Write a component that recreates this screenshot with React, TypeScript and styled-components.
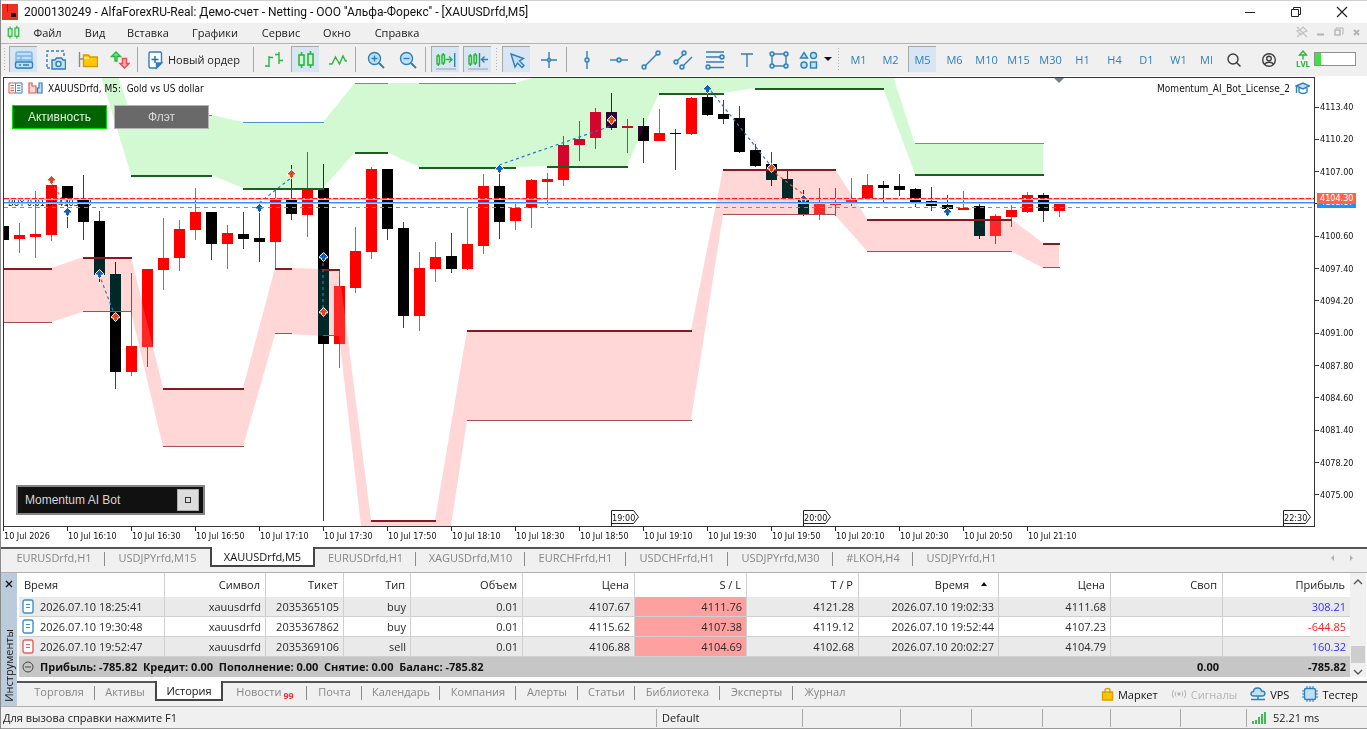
import React from "react";
import styled, { createGlobalStyle, css } from "styled-components";

const BLUE = "#2f7fb8";
const LIGHT = "#bfe0fb";
const GREEN = "#27b83c";
const UI_FONT = '"Open Sans", "Noto Sans", sans-serif';
const CHART_FONT = '"DejaVu Sans Condensed", "DejaVu Sans", sans-serif';

const GlobalStyle = createGlobalStyle`
  * { box-sizing: border-box; }
  body { margin: 0; background: #f0f0f0; font-family: ${UI_FONT}; font-size: 11px; color: #1b1b1b; }
  button { font: inherit; color: inherit; background: none; border: 0; padding: 0; margin: 0; }
  svg { display: block; flex: none; }
`;

const Window = styled.div`
  display: flex;
  flex-direction: column;
  min-height: 100vh;
  border: solid #8a8a8a;
  border-width: 0 0 0 1px;
  background: #f0f0f0;
`;

const TitleBar = styled.header`
  display: flex;
  align-items: center;
  height: 23px;
  padding: 0 18px 1px 1px;
  gap: 6px;
  background: #fff;
  border-top: 1px solid #d0d0d0;
`;

const Title = styled.h1`
  margin: 0;
  flex: 1;
  font-family: Roboto, sans-serif;
  font-size: 12px;
  font-weight: 400;
  color: #111;
  white-space: nowrap;
`;

const WindowControls = styled.div`
  display: flex;
  gap: 32px;
`;

const MenuBar = styled.nav`
  display: flex;
  align-items: center;
  height: 20px;
  padding: 0 4px 2px 5px;
  background: #f0f0f0;
`;

const MenuItem = styled.button<{ $width: number }>`
  width: ${(p) => p.$width}px;
  text-align: center;
  color: #1b1b1b;
`;

const DocControls = styled.div`
  display: flex;
  gap: 4px;
  margin-left: auto;
`;

const Toolbar = styled.div`
  display: flex;
  align-items: center;
  height: 33px;
  padding: 0 0 2px 6px;
  border-top: 1px solid #b4b4b4;
  background: #f0f0f0;
  position: relative;
`;

const Grip = styled.span<{ $lead?: boolean }>`
  flex: none;
  width: 7px;
  height: 25px;
  background: radial-gradient(circle, #b3b3b3 1px, transparent 1px) 2px 0 / 3px 3px repeat-y;
  ${(p) => p.$lead && css`position: absolute; left: 0;`}
`;

const Separator = styled.span`
  flex: none;
  width: 6px;
  height: 25px;
  border-left: 1px solid #a9a9a9;
  background: transparent;
  margin-left: 2px;
  margin-right: -2px;
`;

const ToolButton = styled.button<{ $active?: boolean; $width?: number }>`
  flex: none;
  display: flex;
  align-items: center;
  justify-content: center;
  gap: 5px;
  width: ${(p) => p.$width ?? 28}px;
  height: 26px;
  margin: 0 2px;
  border: solid transparent;
  border-width: 1px 0 0 1px;
  ${(p) => p.$active && css`background: #d8e6f3; border-color: #a8a8a8;`}
`;

const NewOrder = styled(ToolButton)`
  justify-content: flex-start;
  padding-left: 3px;
  font-size: 11px;
  white-space: nowrap;
`;

const TimeframeButton = styled(ToolButton)`
  color: ${BLUE};
  font-size: 11px;
  font-weight: 500;
  overflow: hidden;
`;

const ClippedFrame = styled(TimeframeButton)`
  justify-content: flex-start;
  padding-left: 3px;
`;

const LevelBadge = styled.span`
  display: flex;
  flex-direction: column;
  align-items: center;
  width: 16px;
  margin: 0 3px 0 11px;
  color: ${GREEN};
  font-size: 8px;
  font-weight: 700;
  line-height: 8px;
`;

const Battery = styled.span`
  width: 42px;
  height: 14px;
  border: 1px solid #8f8f8f;
  background: linear-gradient(90deg, #41e041 6px, #fff 6px);
`;

const ChartArea = styled.main`
  display: flex;
  flex: 1;
  padding: 1px 2px 0 2px;
  background: #fff;
  font-family: ${CHART_FONT};
  font-size: 9px;
  color: #111;
`;

const ChartColumn = styled.div`
  flex: 1;
  min-width: 0;
  display: flex;
  flex-direction: column;
`;

const Plot = styled.section`
  position: relative;
  height: 450px;
  border: 1px solid #333;
  overflow: hidden;
`;

const ChartHead = styled.div`
  position: absolute;
  inset: 3px 4px auto 4px;
  display: flex;
  align-items: center;
  gap: 5px;
  height: 14px;
  font-size: 10px;
  white-space: pre;
`;

const ExpertName = styled.span`
  margin-left: auto;
`;

const ModeButtons = styled.div`
  position: absolute;
  left: 8px;
  top: 27px;
  display: flex;
  gap: 7px;
`;

const ModeButton = styled.button<{ $on?: boolean }>`
  width: 95px;
  height: 24px;
  font: 12px "Liberation Sans", Arial, sans-serif;
  color: ${(p) => (p.$on ? "#e2f0e2" : "#d8d8d8")};
  background: ${(p) => (p.$on ? "#006400" : "#696969")};
  border: 1px solid ${(p) => (p.$on ? "#00e000" : "#b4b4b4")};
`;

const BotPanel = styled.div`
  position: absolute;
  left: 12px;
  bottom: 11px;
  display: flex;
  align-items: center;
  justify-content: space-between;
  width: 189px;
  height: 30px;
  padding: 0 4px 0 7px;
  font: 12px "Liberation Sans", Arial, sans-serif;
  color: #d6d6d6;
  background: #111;
  border: 2px solid #858585;
`;

const BotToggle = styled.button`
  width: 22px;
  height: 22px;
  display: grid;
  place-items: center;
  background: #dcdcdc;
  border: 1px solid #aaa;
`;

const TimeAxis = styled.div`
  display: flex;
  height: 20px;
  overflow: hidden;
`;

const TimeLabel = styled.span`
  flex: none;
  width: 64px;
  height: 4px;
  border-left: 1px solid #333;
  line-height: 19px;
  white-space: nowrap;
`;

const PriceAxis = styled.aside`
  position: relative;
  flex: none;
  width: 50px;
  height: 450px;
  padding: 23px 0 25px;
  display: flex;
  flex-direction: column;
  justify-content: space-between;
`;

const PriceLabel = styled.span`
  display: flex;
  align-items: center;
  height: 14px;
  &::before { content: ""; width: 4px; height: 1px; background: #333; margin-right: 1px; }
`;

const PriceTag = styled.span<{ $top: number; $color: string }>`
  position: absolute;
  left: 2px;
  top: ${(p) => p.$top}px;
  width: 39px;
  height: 11px;
  padding-left: 3px;
  line-height: 11px;
  color: #fff;
  background: ${(p) => p.$color};
`;

const TabBar = styled.div<{ $height: number; $indent: number }>`
  display: flex;
  align-items: flex-start;
  height: ${(p) => p.$height}px;
  padding-left: ${(p) => p.$indent}px;
  background: #f0f0f0;
  border-top: 2px solid #555;
  border-bottom: 1px solid #b0b0b0;
`;

const Tab = styled.button<{ $width: number; $active?: boolean; $divider?: boolean }>`
  position: relative;
  flex: none;
  width: ${(p) => p.$width}px;
  height: 19px;
  padding-bottom: 3px;
  color: #868686;
  white-space: nowrap;
  ${(p) => p.$divider && css`
    &::after {
      content: "";
      position: absolute;
      right: 0;
      top: 3px;
      height: 14px;
      border-right: 1px solid #8c8c8c;
    }
  `}
  ${(p) => p.$active && css`
    color: #111;
    background: #fff;
    height: 20px;
    padding-bottom: 0;
    margin-top: -2px;
    border: solid #444;
    border-width: 0 2px 2px 2px;
  `}
`;

const TabScroll = styled.span`
  margin: 5px 12px 0 auto;
`;

const Unread = styled.sub`
  color: #f0303c;
  font-size: 9px;
  font-weight: 700;
  line-height: 0;
  margin-left: 2px;
`;

const Terminal = styled.section`
  display: flex;
  background: #fff;
`;

const SideStrip = styled.div`
  flex: none;
  width: 16px;
  display: flex;
  flex-direction: column;
  align-items: center;
  justify-content: space-between;
  padding: 7px 0 4px;
  background: #bccbdb;
  border-bottom: 1px solid #b0b0b0;
`;

const SideTitle = styled.span`
  writing-mode: vertical-rl;
  transform: rotate(180deg);
  line-height: 14px;
`;

const TerminalBody = styled.div`
  flex: 1;
  min-width: 0;
`;

const TableWrap = styled.div`
  display: flex;
  padding: 0 1px 4px 2px;
`;

const History = styled.table`
  flex: 1;
  width: 100%;
  table-layout: fixed;
  border-collapse: separate;
  border-spacing: 0;
`;

const HeadCell = styled.th<{ $left?: boolean }>`
  height: 24px;
  padding: 0 5px 2px;
  font-weight: 400;
  text-align: ${(p) => (p.$left ? "left" : "right")};
  border-right: 1px solid #d0d0d0;
  &:last-child { border-right: 0; }
`;

const SortMark = styled.svg`
  && { display: inline-block; }
  margin: 0 6px 3px 12px;
`;

const Row = styled.tr<{ $shade?: boolean }>`
  background: ${(p) => (p.$shade ? "#eaeaea" : "#fff")};
`;

const Cell = styled.td<{ $stop?: boolean; $color?: string }>`
  height: 20px;
  padding: 0 4px 0 3px;
  text-align: right;
  line-height: 19px;
  color: ${(p) => p.$color ?? "#2a2a2a"};
  border-right: 1px solid #d0d0d0;
  border-bottom: 1px solid #d0d0d0;
  ${(p) => p.$stop && css`background: #ffa0a0;`}
  &:last-child { border-right: 0; }
`;

const TimeCell = styled.div`
  display: flex;
  align-items: center;
  gap: 6px;
`;

const SumCell = styled.td<{ $left?: boolean }>`
  height: 20px;
  padding: 0 4px 1px 3px;
  font-weight: 700;
  color: #111;
  background: #c6c6c6;
  text-align: ${(p) => (p.$left ? "left" : "right")};
`;

const SumText = styled.div`
  display: flex;
  align-items: center;
  gap: 6px;
  white-space: pre;
`;

const ScrollBar = styled.div`
  flex: none;
  width: 16px;
  display: flex;
  flex-direction: column;
  align-items: center;
  justify-content: space-between;
  padding: 6px 0 2px;
  background: #f0f0f0;
`;

const Thumb = styled.span`
  width: 14px;
  height: 17px;
  margin-top: auto;
  margin-bottom: 6px;
  background: #cdcdcd;
`;

const Services = styled.div`
  display: flex;
  align-items: center;
  gap: 13px;
  height: 22px;
  margin-left: auto;
  padding-right: 9px;
`;

const Service = styled.button<{ $off?: boolean }>`
  display: flex;
  align-items: center;
  gap: 4px;
  color: ${(p) => (p.$off ? "#b4b4b4" : "#111")};
`;

const StatusBar = styled.footer`
  display: flex;
  align-items: center;
  height: 22px;
  padding-left: 2px;
  background: #f0f0f0;
  border-bottom: 1px solid #999;
`;

const StatusCell = styled.span<{ $width?: number }>`
  ${(p) => (p.$width ? css`flex: none; width: ${p.$width}px;` : css`flex: 1;`)}
  display: flex;
  align-items: center;
  gap: 6px;
  height: 18px;
  &:not(:first-child) { padding-left: 5px; border-left: 1px solid #a9a9a9; }
`;

/* ---------- icons ---------- */

type IconProps = { w?: number; h?: number; c?: string; children: React.ReactNode };
const Icon = ({ w = 20, h = 20, c = BLUE, children }: IconProps) => (
  <svg width={w} height={h} viewBox={`0 0 ${w} ${h}`} fill="none" stroke={c} strokeWidth={1.4} aria-hidden="true">
    {children}
  </svg>
);

const Dot = ({ x, y }: { x: number; y: number }) => <circle cx={x} cy={y} r={2} fill={LIGHT} />;

const TerminalIcon = () => (
  <Icon>
    <rect x="2" y="2" width="16" height="16" rx="1.5" fill={LIGHT} stroke="#7eb4dd" />
    <path d="M2 6h16M2 10h16M7 6v5" stroke="#7eb4dd" />
    <rect x="1.5" y="12" width="17" height="6" rx="1.5" fill={LIGHT} />
    <path d="M5 15h2M9 15h6" />
  </Icon>
);
const CameraIcon = () => (
  <Icon>
    <path d="M1 17V1h17v6" strokeDasharray="3 2" />
    <path d="M1 18h3" />
    <path d="M6 10h3l1.500-2h5l1.500 2h2.500v9h-13.500z" fill={LIGHT} />
    <circle cx="12.500" cy="14" r="2.500" fill="#fff" />
  </Icon>
);
const FolderIcon = () => (
  <Icon c="#888">
    <path d="M1.500 2v15M1.500 9h4" />
    <path d="M5.500 5h5l1.500 2h7.500v9.500h-14z" fill="#ffc800" stroke="#d19a00" />
    <path d="M6 8h5" stroke="#fff3b0" />
  </Icon>
);
const ArrowsIcon = () => (
  <Icon>
    <path d="M5 11V6.500H1.500L6 2l4.500 4.500H7V11z" fill="#7ee08a" stroke={GREEN} />
    <path d="M12.500 8.500v5H10l4.500 4.500 4.500-4.500h-2.500v-5z" fill="#ffaaaa" stroke="#e05050" />
  </Icon>
);
const NewOrderIcon = () => (
  <Icon w={16}>
    <path d="M3 2h10.500l1 1v10l-5 5H3l-1-1V3z" fill="#fff" />
    <path d="M14.500 13h-5v5z" fill={BLUE} />
    <path d="M8 6v7M4.500 9.500h7" stroke="#1c6ea4" />
  </Icon>
);
const BarsIcon = () => (
  <Icon c={GREEN}>
    <path d="M5 6v11M1 16h4M5 7.500h4M15 2v12M11 4.500h4M15 10.500h4" />
  </Icon>
);
const CandlesIcon = ({ s = 20 }: { s?: number }) => (
  <svg width={s} height={s} viewBox="0 0 20 20" fill="none" stroke={GREEN} strokeWidth={1.6} aria-hidden="true">
    <path d="M5.500 2v3M5.500 15v3M14.500 1v3M14.500 14v4" />
    <rect x="3" y="5" width="5" height="10" fill="#d6f5d9" />
    <rect x="12" y="4" width="5" height="11" fill="#d6f5d9" />
  </svg>
);
const LineIcon = () => (
  <Icon c={GREEN}>
    <path d="M1 14h3l3.500-7 4 7 3.500-8 2.500 5H19" />
  </Icon>
);
const ZoomIcon = ({ plus }: { plus?: boolean }) => (
  <Icon>
    <circle cx="8.500" cy="8.500" r="6" fill={LIGHT} />
    <path d={plus ? "M5.500 8.500h6M8.500 5.500v6" : "M5.500 8.500h6"} />
    <path d="M13 13l5 5" strokeWidth="2" />
  </Icon>
);
const ShiftIcon = ({ scroll }: { scroll?: boolean }) => (
  <Icon w={22}>
    <g stroke={GREEN}>
      <rect x="2" y="6" width="2.500" height="8" fill="#b9ecbf" />
      <rect x="7" y="5" width="2.500" height="8" fill="#b9ecbf" />
      <path d="M3.250 4v2M3.250 14v2M8.250 3v2M8.250 13v2" />
    </g>
    {scroll ? (
      <>
        <path d="M10.500 9.500h6.500M14 6.500l3 3-3 3" stroke={GREEN} />
        <path d="M19.700 3v14" />
      </>
    ) : (
      <path d="M12.500 3v14M21 9.500h-6M17.500 6.500l-3 3 3 3" />
    )}
    <path d="M1 19h20" stroke="#a9b4bd" />
  </Icon>
);
const CursorIcon = () => (
  <Icon>
    <path d="M4 4l12.500 4.500-4 2.500 4.500 4.500-2 2-4.500-4.500-2.500 4z" fill={LIGHT} />
  </Icon>
);
const CrossIcon = () => (
  <Icon><path d="M10 2v16M2 10h16" /><circle cx="10" cy="10" r="1.500" fill={LIGHT} /></Icon>
);
const VLineIcon = () => <Icon><path d="M10 1v18" /><Dot x={10} y={10} /></Icon>;
const HLineIcon = () => <Icon><path d="M1 10h18" /><Dot x={10} y={10} /></Icon>;
const TrendIcon = () => <Icon><path d="M3 17L17 3" /><Dot x={3} y={17} /><Dot x={17} y={3} /></Icon>;
const ChannelIcon = () => (
  <Icon>
    <path d="M3 12L11 4M9 17l10-10" />
    <Dot x={3} y={12} /><Dot x={11} y={3} /><Dot x={9} y={17} />
  </Icon>
);
const FiboIcon = () => (
  <Icon>
    <path d="M1 2h18M1 7h18M1 12h18M1 17.500h18" />
    <Dot x={17} y={7} /><Dot x={3} y={17} />
  </Icon>
);
const TextIcon = () => <Icon><path d="M4 4h12M10 4v13" /></Icon>;
const RectIcon = () => (
  <Icon>
    <rect x="3" y="4" width="14" height="12" />
    <Dot x={3} y={4} /><Dot x={17} y={4} /><Dot x={3} y={16} /><Dot x={17} y={16} />
  </Icon>
);
const ShapesIcon = () => (
  <Icon>
    <path d="M5 2.500L8.500 8h-7z" fill={LIGHT} />
    <circle cx="14.500" cy="5.500" r="3" fill={LIGHT} />
    <circle cx="5" cy="15" r="3" fill={LIGHT} />
    <rect x="11.500" y="12" width="6" height="6" fill={LIGHT} />
  </Icon>
);
const SearchIcon = () => (
  <Icon w={16} h={16} c="#3d3d3d"><circle cx="7" cy="7" r="5" /><path d="M10.500 10.500l4 4" /></Icon>
);
const UserIcon = () => (
  <Icon w={16} h={16} c="#3d3d3d">
    <circle cx="8" cy="8" r="6.300" /><circle cx="8" cy="6.500" r="2.300" /><path d="M3.700 12.500c1-3 7.600-3 8.600 0" />
  </Icon>
);
const DocIcon = ({ c }: { c: string }) => (
  <Icon w={12} h={15} c={c}>
    <rect x="1" y="1" width="10" height="13" rx="2" fill="#fff" /><path d="M4 5.500h4M4 8.500h4" strokeWidth="1" />
  </Icon>
);

/* ---------- chart data ---------- */

/* x, wick top, body top, body bottom, wick bottom, 1 = red / 0 = black */
const candles: number[][] = [
  [3, 226, 226, 240, 240, 0], [19, 223, 235, 239, 253, 1], [35, 191, 234, 237, 258, 1], [51, 182, 185, 235, 241, 1],
  [67, 186, 186, 200, 228, 0], [83, 175, 199, 222, 240, 0], [99, 211, 221, 275, 282, 0], [115, 262, 274, 372, 389, 0],
  [131, 273, 346, 372, 376, 1], [147, 269, 269, 347, 367, 1], [163, 218, 258, 270, 290, 1], [179, 220, 229, 258, 271, 1],
  [195, 188, 212, 230, 240, 1], [211, 212, 212, 244, 260, 0], [227, 225, 233, 244, 269, 1], [243, 212, 234, 239, 249, 0],
  [259, 212, 238, 242, 262, 0], [275, 190, 200, 242, 270, 1], [291, 165, 200, 214, 220, 0], [307, 152, 188, 215, 237, 1],
  [323, 164, 188, 344, 521, 0], [339, 270, 286, 344, 368, 1], [355, 227, 251, 288, 293, 1], [371, 167, 169, 252, 259, 1],
  [387, 169, 169, 229, 240, 0], [403, 222, 228, 316, 328, 0], [419, 252, 268, 316, 331, 1], [435, 242, 257, 269, 282, 1],
  [451, 233, 256, 269, 273, 0], [467, 208, 244, 269, 270, 1], [483, 174, 186, 246, 254, 1], [499, 170, 186, 222, 239, 0],
  [515, 204, 208, 221, 230, 1], [531, 179, 180, 208, 228, 1], [547, 173, 179, 182, 205, 1], [563, 136, 145, 180, 186, 1],
  [579, 121, 139, 145, 161, 1], [595, 108, 112, 138, 149, 1], [611, 93, 112, 128, 130, 0], [627, 119, 126, 128, 153, 1],
  [643, 118, 126, 141, 163, 0], [659, 109, 133, 141, 141, 1], [675, 129, 133, 134, 170, 0], [691, 97, 98, 134, 135, 1],
  [707, 94, 97, 115, 116, 0], [723, 100, 114, 119, 124, 0], [739, 106, 118, 152, 153, 0], [755, 144, 150, 166, 167, 0],
  [771, 152, 164, 180, 186, 0], [787, 171, 179, 198, 199, 0], [803, 190, 199, 214, 216, 0], [819, 188, 204, 215, 220, 1],
  [835, 188, 203, 205, 216, 1], [851, 178, 199, 204, 206, 1], [867, 174, 185, 200, 200, 1], [883, 181, 185, 188, 204, 0],
  [899, 174, 186, 190, 196, 0], [915, 188, 189, 202, 207, 0], [931, 187, 201, 206, 211, 0], [947, 195, 205, 209, 210, 0],
  [963, 191, 208, 210, 210, 1], [979, 204, 206, 236, 239, 0], [995, 214, 216, 236, 244, 1], [1011, 205, 210, 217, 227, 1],
  [1027, 192, 195, 212, 213, 1], [1043, 193, 195, 211, 222, 0], [1059, 203, 203, 211, 217, 1],
];

const greenBand =
  "99,70 131,175 211,175 243,188 323,188 355,152 387,152 419,167 515,167 547,166 627,166 659,93 723,93 755,88 883,88 915,174 1043,174 1043,144 915,144 891,70 560,70 515,83 355,83 323,122 243,122 211,115 131,115 116,70";
const redBand =
  "3,268 51,268 83,257 131,257 163,388 243,388 275,268 291,268 323,269 339,269 371,520 435,520 467,330 691,330 723,169 835,169 867,219 1011,219 1043,243 1059,243 1059,268 1043,268 1011,251 867,251 835,215 723,215 691,420 467,420 435,632 371,612 339,336 323,336 291,334 275,334 243,447 163,447 131,312 83,312 51,322 3,322";

type Level = [number, number, number];
const greenLevels: Level[] = [[131, 211, 175], [243, 323, 188], [355, 387, 152], [419, 515, 167], [547, 627, 166], [659, 723, 93], [755, 883, 88], [915, 1043, 174]];
const blueLevels: Level[] = [[131, 211, 115], [243, 323, 122], [355, 387, 83], [419, 515, 83], [915, 1043, 143]];
const redLevels: Level[] = [[3, 51, 268], [83, 131, 257], [163, 243, 388], [275, 291, 268], [323, 339, 269], [371, 435, 520], [467, 691, 330], [723, 835, 169], [867, 1011, 219], [1043, 1059, 243]];
const lowLevels: Level[] = [[3, 51, 322], [83, 131, 311], [163, 243, 446], [275, 291, 333], [323, 339, 335], [467, 691, 420], [723, 835, 214], [867, 1011, 251], [1043, 1059, 267]];

const trades: [number, number, number, number, string][] = [
  [259, 203, 291, 178, "#2a78c0"], [99, 274, 115, 316, "#2a78c0"], [323, 257, 323, 312, "#2a78c0"], [499, 165, 611, 126, "#2a78c0"],
  [707, 86, 771, 166, "#2a78c0"], [51, 182, 67, 206, "#e8502a"], [771, 170, 803, 194, "#e8502a"],
];
const buys = [[67, 212], [99, 274], [259, 208], [323, 257], [499, 169], [707, 89], [803, 199], [947, 212]];
const sells = [[51, 180], [115, 317], [291, 174], [323, 312], [611, 120], [771, 168]];
const marks: [number, string][] = [[611, "19:00"], [803, "20:00"], [1283, "22:30"]];

const Levels = ({ data, color, thick }: { data: Level[]; color: string; thick: number }) => (
  <g fill={color}>
    {data.map(([a, b, y], i) => <rect key={i} x={a} y={y} width={b - a + 1} height={thick} />)}
  </g>
);

const Arrows = ({ points, color }: { points: number[][]; color: string }) => (
  <g fill={color} stroke="#fff" strokeWidth="1">
    {points.map(([x, y], i) => (
      <path key={i} d={`M${x + 0.5} ${y - 4.5}l4 4v1.500h-2v1.500l-2 2-2-2v-1.500h-2v-1.500z`} />
    ))}
  </g>
);

const BandShape = styled.polygon`
  mix-blend-mode: difference;
`;

const PriceChart = () => (
  <svg width="100%" height="448" role="img" aria-label="XAUUSDrfd M5">
    <rect width="100%" height="448" fill="#fff" />
    <g transform="translate(-4 -78)">
      <g shapeRendering="crispEdges">
        {candles.map(([x, wt, bt, bb, wb, up]) => (
          <g key={x} fill={up ? "#ff0000" : "#000"}>
            <rect x={x} y={wt} width={1} height={wb - wt} opacity={0.75} />
            <rect x={x - 5} y={bt} width={11} height={bb - bt} />
          </g>
        ))}
      </g>
      <BandShape points={greenBand} fill="#2d062d" />
      <BandShape points={redBand} fill="#002828" />
      <g shapeRendering="crispEdges">
        <Levels data={greenLevels} color="#1b5e20" thick={2} />
        <Levels data={blueLevels} color="#4a98c8" thick={1} />
        <Levels data={redLevels} color="#861a1e" thick={2} />
        <Levels data={lowLevels} color="#a34f52" thick={1} />
      </g>
      <text x="8" y="206" fontSize="9" fill="#111">BUY 0.01 at 4103.60</text>
      <g>
        {trades.map(([x1, y1, x2, y2, c], i) => (
          <line key={i} x1={x1} y1={y1} x2={x2} y2={y2} stroke={c} strokeWidth="1.200" strokeDasharray="3 3" />
        ))}
      </g>
      <Arrows points={buys} color="#0f5fb5" />
      <Arrows points={sells} color="#e8431c" />
      <path d="M1054 78h10l-5 5z" fill="#708090" />
      {marks.map(([x, t]) => (
        <g key={t}>
          <path d={`M${x + 0.5} 527v-16.500h22l5 6.500-5 6.500h-22`} fill="#fff" stroke="#222" />
          <text x={x + 1} y="521" fontSize="9" fill="#111">{t}</text>
        </g>
      ))}
    </g>
    <g shapeRendering="crispEdges">
      <rect y="120" width="100%" height="2" fill="#ffb3a8" />
      <line x1="0" y1="120.500" x2="100%" y2="120.500" stroke="#ff1f1f" strokeDasharray="5 2" />
      <rect y="124" width="100%" height="1" fill="#3a90ff" />
      <rect y="125" width="100%" height="1" fill="#a4ceff" />
      <line x1="0" y1="129.500" x2="100%" y2="129.500" stroke="#32c832" strokeDasharray="4 4" />
    </g>
  </svg>
);

/* ---------- page data ---------- */

const menu: [string, number][] = [["Файл", 53], ["Вид", 42], ["Вставка", 64], ["Графики", 70], ["Сервис", 62], ["Окно", 50], ["Справка", 70]];
const frames = ["M1", "M2", "M5", "M6", "M10", "M15", "M30", "H1", "H4", "D1", "W1"];
const prices = ["4113.40", "4110.20", "4107.00", "4103.80", "4100.60", "4097.40", "4094.20", "4091.00", "4087.80", "4084.60", "4081.40", "4078.20", "4075.00"];
const times = ["2026", "16:10", "16:30", "16:50", "17:10", "17:30", "17:50", "18:10", "18:30", "18:50", "19:10", "19:30", "19:50", "20:10", "20:30", "20:50", "21:10"];
const chartTabs: [string, number][] = [["EURUSDrfd,H1", 102], ["USDJPYrfd,M15", 105], ["XAUUSDrfd,M5", 105], ["EURUSDrfd,H1", 101], ["XAGUSDrfd,M10", 109], ["EURCHFrfd,H1", 101], ["USDCHFrfd,H1", 102], ["USDJPYrfd,M30", 105], ["#LKOH,H4", 80], ["USDJPYrfd,H1", 97]];
const toolTabs: [string, number][] = [["Торговля", 72], ["Активы", 60], ["История", 68], ["Новости", 84], ["Почта", 55], ["Календарь", 78], ["Компания", 76], ["Алерты", 62], ["Статьи", 57], ["Библиотека", 85], ["Эксперты", 73], ["Журнал", 64]];
const columns: [string, number][] = [["Время", 146], ["Символ", 101], ["Тикет", 78], ["Тип", 67], ["Объем", 112], ["Цена", 112], ["S / L", 112], ["T / P", 112], ["Время", 140], ["Цена", 112], ["Своп", 112], ["Прибыль", 127]];
const rows = [
  ["2026.07.10 18:25:41", "xauusdrfd", "2035365105", "buy", "0.01", "4107.67", "4111.76", "4121.28", "2026.07.10 19:02:33", "4111.68", "", "308.21"],
  ["2026.07.10 19:30:48", "xauusdrfd", "2035367862", "buy", "0.01", "4115.62", "4107.38", "4119.12", "2026.07.10 19:52:44", "4107.23", "", "-644.85"],
  ["2026.07.10 19:52:47", "xauusdrfd", "2035369106", "sell", "0.01", "4106.88", "4104.69", "4102.68", "2026.07.10 20:02:27", "4104.79", "", "160.32"],
];

export default function App() {
  return (
    <Window>
      <GlobalStyle />
      <TitleBar>
        <svg width="16" height="16" viewBox="0 0 16 16" aria-hidden="true">
          <rect width="16" height="16" fill="#ef3124" />
          <path d="M5 0h1v8H5z" fill="#b01510" />
          <rect x="9" y="9" width="5" height="4" fill="#2a0d0b" />
        </svg>
        <Title>2000130249 - AlfaForexRU-Real: Демо-счет - Netting - ООО ''Альфа-Форекс'' - [XAUUSDrfd,M5]</Title>
        <WindowControls>
          <button aria-label="Свернуть"><Icon w={14} h={14} c="#222"><path d="M2 7.500h10" strokeWidth="1" /></Icon></button>
          <button aria-label="Восстановить">
            <Icon w={14} h={14} c="#222"><path d="M4.500 4.500v-2h7v7h-2M2.500 4.500h7v7h-7z" strokeWidth="1" /></Icon>
          </button>
          <button aria-label="Закрыть"><Icon w={14} h={14} c="#222"><path d="M2 2l10 10M12 2L2 12" strokeWidth="1.200" /></Icon></button>
        </WindowControls>
      </TitleBar>

      <MenuBar>
        <CandlesIcon s={15} />
        {menu.map(([t, w]) => <MenuItem key={t} $width={w}>{t}</MenuItem>)}
        <DocControls>
          <button aria-label="Закрепить"><Icon w={14} h={14} c="#c2c2c2"><path d="M2 2l10 10M2 12l4-4M8 2l4 4-3 1-3 3-4-4 3-1z" strokeWidth="1.200" /></Icon></button>
          <button aria-label="Свернуть график"><Icon w={14} h={14} c="#b4b4b4"><path d="M4 9.500h7" strokeWidth="2" /></Icon></button>
          <button aria-label="Развернуть график"><Icon w={14} h={14} c="#b4b4b4"><path d="M5 4V3h7v6h-1" strokeWidth="1" /><rect x="4" y="5" width="5" height="5" /></Icon></button>
          <button aria-label="Закрыть график"><Icon w={14} h={14} c="#b4b4b4"><path d="M5 5l5 5M10 5l-5 5" strokeWidth="2" /></Icon></button>
        </DocControls>
      </MenuBar>

      <Toolbar role="toolbar">
        <Grip $lead />
        <ToolButton $active aria-label="Инструменты"><TerminalIcon /></ToolButton>
        <ToolButton aria-label="Снимок"><CameraIcon /></ToolButton>
        <ToolButton aria-label="Папка"><FolderIcon /></ToolButton>
        <ToolButton aria-label="Торговля"><ArrowsIcon /></ToolButton>
        <Separator />
        <NewOrder $width={106}><NewOrderIcon />Новый ордер</NewOrder>
        <Separator />
        <ToolButton aria-label="Бары"><BarsIcon /></ToolButton>
        <ToolButton $active aria-label="Свечи"><CandlesIcon /></ToolButton>
        <ToolButton aria-label="Линия"><LineIcon /></ToolButton>
        <Separator />
        <ToolButton aria-label="Увеличить"><ZoomIcon plus /></ToolButton>
        <ToolButton aria-label="Уменьшить"><ZoomIcon /></ToolButton>
        <Separator />
        <ToolButton $active aria-label="Автопрокрутка"><ShiftIcon scroll /></ToolButton>
        <ToolButton $active aria-label="Сдвиг"><ShiftIcon /></ToolButton>
        <Grip />
        <ToolButton $active aria-label="Курсор"><CursorIcon /></ToolButton>
        <ToolButton aria-label="Перекрестие"><CrossIcon /></ToolButton>
        <Separator />
        <ToolButton aria-label="Вертикальная линия"><VLineIcon /></ToolButton>
        <ToolButton aria-label="Горизонтальная линия"><HLineIcon /></ToolButton>
        <ToolButton aria-label="Трендовая линия"><TrendIcon /></ToolButton>
        <ToolButton aria-label="Канал"><ChannelIcon /></ToolButton>
        <ToolButton aria-label="Фибоначчи"><FiboIcon /></ToolButton>
        <ToolButton aria-label="Текст"><TextIcon /></ToolButton>
        <ToolButton aria-label="Прямоугольник"><RectIcon /></ToolButton>
        <ToolButton $width={37} aria-label="Фигуры">
          <ShapesIcon />
          <svg width="8" height="5" aria-hidden="true"><path d="M0 0h8L4 4z" fill="#111" /></svg>
        </ToolButton>
        <Grip />
        {frames.map((f) => <TimeframeButton key={f} $active={f === "M5"}>{f}</TimeframeButton>)}
        <ClippedFrame $width={16}>MN</ClippedFrame>
        <ToolButton $width={34} aria-label="Поиск"><SearchIcon /></ToolButton>
        <ToolButton aria-label="Профиль"><UserIcon /></ToolButton>
        <LevelBadge>
          <Icon w={10} h={10} c={GREEN}><path d="M5 9.500V5M5 1L1.500 5h7z" /></Icon>
          LVL
        </LevelBadge>
        <Battery />
      </Toolbar>

      <ChartArea>
        <ChartColumn>
          <Plot>
            <PriceChart />
            <ChartHead>
              <Icon w={15} h={12}>
                <path d="M7.500 1H14v10H7.500" fill="#fff" strokeWidth="1" />
                <path d="M7.500 1H1v10h6.500z" fill="#fff" stroke="#e0584e" strokeWidth="1" />
                <path d="M2.500 3.500H6M2.500 6H6M2.500 8.500H6" stroke="#e0584e" strokeWidth="1" />
                <path d="M9 3.500h3.500M9 6h3.500M9 8.500h3.500" strokeWidth="1" />
              </Icon>
              <Icon w={15} h={12}>
                <path d="M1 1h3v3h4v7H1z" fill="#ffd9d6" stroke="#e0584e" strokeWidth="1.200" />
                <path d="M14 1h-3v5H9.500v5H14z" fill={LIGHT} strokeWidth="1.200" />
              </Icon>
              <span>XAUUSDrfd, M5:  Gold vs US dollar</span>
              <ExpertName>Momentum_AI_Bot_License_2</ExpertName>
              <Icon w={15} h={13}>
                <path d="M1 4l7-3 6.500 3L8 7z" fill={LIGHT} />
                <path d="M4 6v4c2 2 6 2 8 0V6M1.500 4v7" />
              </Icon>
            </ChartHead>
            <ModeButtons>
              <ModeButton $on>Активность</ModeButton>
              <ModeButton>Флэт</ModeButton>
            </ModeButtons>
            <BotPanel>
              Momentum AI Bot
              <BotToggle aria-label="Развернуть панель">
                <Icon w={8} h={8} c="#333"><rect x="1.500" y="1.500" width="5" height="5" strokeWidth="1" /></Icon>
              </BotToggle>
            </BotPanel>
          </Plot>
          <TimeAxis>
            {times.map((t) => <TimeLabel key={t}>10 Jul {t}</TimeLabel>)}
          </TimeAxis>
        </ChartColumn>
        <PriceAxis>
          {prices.map((p) => <PriceLabel key={p}>{p}</PriceLabel>)}
          <PriceTag $top={120} $color="#1e90ff">4103.87</PriceTag>
          <PriceTag $top={116} $color="#ff6347">4104.30</PriceTag>
        </PriceAxis>
      </ChartArea>

      <TabBar $height={26} $indent={2}>
        {chartTabs.map(([t, w], i) => (
          <Tab key={i} $width={w} $active={i === 2} $divider={i !== 1 && i !== 2 && i !== 9}>{t}</Tab>
        ))}
        <TabScroll>
          <Icon w={26} h={8} c="none"><path d="M5 1v6L2 4zM21 1v6l3-3z" fill="#b0b0b0" /></Icon>
        </TabScroll>
      </TabBar>

      <Terminal>
        <SideStrip>
          <button aria-label="Закрыть панель"><Icon w={8} h={8} c="#111"><path d="M1 1l6 6M7 1L1 7" /></Icon></button>
          <SideTitle>Инструменты</SideTitle>
        </SideStrip>
        <TerminalBody>
          <TableWrap>
            <History>
              <colgroup>{columns.map(([, w], i) => <col key={i} width={w} />)}</colgroup>
              <thead>
                <tr>
                  {columns.map(([t], i) => (
                    <HeadCell key={i} $left={i === 0}>
                      {t}
                      {i === 8 && <SortMark width="6" height="4" aria-hidden="true"><path d="M0 4h6L3 0z" fill="#111" /></SortMark>}
                    </HeadCell>
                  ))}
                </tr>
              </thead>
              <tbody>
                {rows.map((r, n) => (
                  <Row key={n} $shade={n !== 1}>
                    {r.map((v, i) => (
                      <Cell key={i} $stop={i === 6} $color={i === 11 ? (v[0] === "-" ? "#ff2020" : "#2f2fff") : undefined}>
                        {i === 0 ? <TimeCell><DocIcon c={n === 2 ? "#e8605c" : "#3f8fc8"} />{v}</TimeCell> : v}
                      </Cell>
                    ))}
                  </Row>
                ))}
                <tr>
                  <SumCell colSpan={10} $left>
                    <SumText>
                      <Icon w={12} h={12} c="#444"><circle cx="6" cy="6" r="5" strokeWidth="1" /><path d="M3 6h6" strokeWidth="1" /></Icon>
                      Прибыль: -785.82  Кредит: 0.00  Пополнение: 0.00  Снятие: 0.00  Баланс: -785.82
                    </SumText>
                  </SumCell>
                  <SumCell>0.00</SumCell>
                  <SumCell>-785.82</SumCell>
                </tr>
              </tbody>
            </History>
            <ScrollBar>
              <Icon w={10} h={6} c="#555"><path d="M1 5l4-4 4 4" /></Icon>
              <Thumb />
              <Icon w={10} h={6} c="#555"><path d="M1 1l4 4 4-4" /></Icon>
            </ScrollBar>
          </TableWrap>
          <TabBar $height={26} $indent={6}>
            {toolTabs.map(([t, w], i) => (
              <Tab key={t} $width={w} $active={i === 2} $divider={i !== 1 && i !== 2 && i !== 11}>
                {t}{i === 3 && <Unread>99</Unread>}
              </Tab>
            ))}
            <Services>
              <Service>
                <Icon w={13} h={14} c="#d9a000"><path d="M1.500 5h10v8h-10z" fill="#ffc400" /><path d="M4 6V3c0-2 5-2 5 0v3" /></Icon>Маркет
              </Service>
              <Service $off>
                <Icon w={16} h={12} c="#b4b4b4"><circle cx="8" cy="6" r="1" /><path d="M5 3.500c-1 1.500-1 3.500 0 5M11 3.500c1 1.500 1 3.500 0 5M2.500 2c-1.500 2.500-1.500 5.500 0 8M13.500 2c1.500 2.500 1.500 5.500 0 8" strokeWidth="1" /></Icon>Сигналы
              </Service>
              <Service>
                <Icon w={16} h={14}><path d="M4 9C0 9 0 4.500 3.500 4.500 4 0 11 0 11.500 4 16 4 16 9 12 9z" fill={LIGHT} /><path d="M8 9v3M1 12.500h14" /></Icon>VPS
              </Service>
              <Service>
                <Icon w={16} h={16}><path d="M5 0v16M8 0v16M11 0v16M0 5h16M0 8h16M0 11h16" strokeWidth="1" /><rect x="2.500" y="2.500" width="11" height="11" rx="1.500" fill={LIGHT} /></Icon>Тестер
              </Service>
            </Services>
          </TabBar>
        </TerminalBody>
      </Terminal>

      <StatusBar>
        <StatusCell>Для вызова справки нажмите F1</StatusCell>
        <StatusCell $width={146}>Default</StatusCell>
        <StatusCell $width={98} />
        <StatusCell $width={71} />
        <StatusCell $width={71} />
        <StatusCell $width={68} />
        <StatusCell $width={70} />
        <StatusCell $width={66} />
        <StatusCell $width={121}>
          <svg width="15" height="12" aria-hidden="true">
            <path d="M0 9h2v3H0zM3 8h2v4H3zM6 5h2v7H6zM9 2h2v10H9zM12 0h2v12h-2z" fill="#3dbb55" />
          </svg>
          52.21 ms
        </StatusCell>
      </StatusBar>
    </Window>
  );
}
